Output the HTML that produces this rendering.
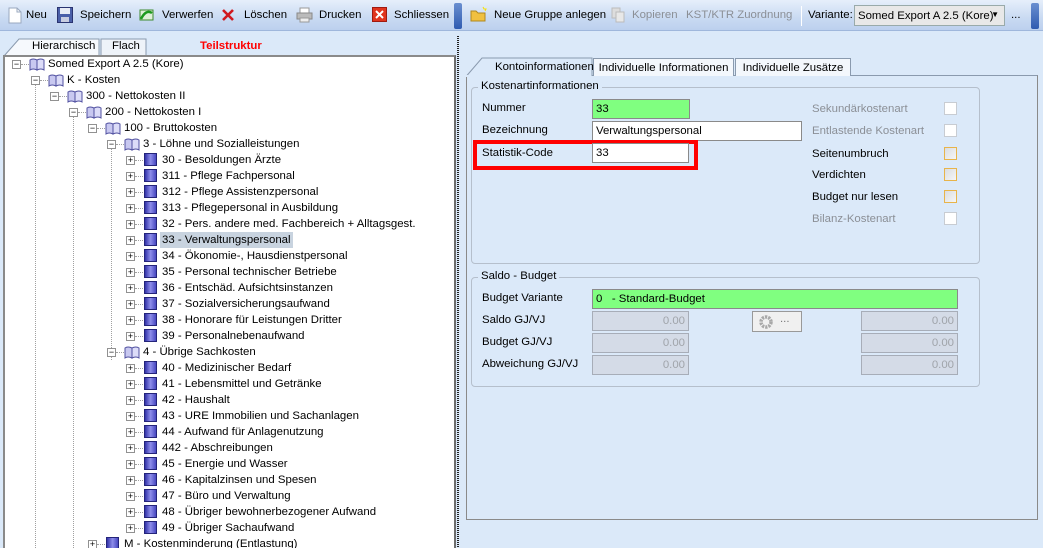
<!DOCTYPE html>
<html><head><meta charset="utf-8"><style>
*{box-sizing:border-box}
html,body{margin:0;width:1043px;height:548px;overflow:hidden}
body{background:#dbe9f9;font-family:"Liberation Sans",sans-serif;font-size:11.4px;color:#000;position:relative}
.a{position:absolute;white-space:nowrap}
.tb{left:0;top:0;width:1043px;height:31px;background:linear-gradient(#e6effb,#c9daf2 60%,#bcd0ee);border-bottom:1px solid #9fb7dc}
.grip{width:8px;height:26px;top:3px;background:linear-gradient(#6a8fd0,#2f5bb0);border-radius:2px}
.ti{top:9px}
.tree{left:3px;top:55px;width:453px;height:493px;background:#fff;border:2px solid #8a8a8a;border-bottom:none;border-right-color:#6d6d6d}
.row{height:16px;line-height:16px}
.exp{width:9px;height:9px;border:1px solid #919191;background:#fff;font-size:9px;line-height:7px;text-align:center;color:#000}
.sq{width:13px;height:13px;background:linear-gradient(90deg,#3232a8,#8e8eea 50%,#4848c0);border:1px solid #24247a}
.tab{height:18px;border:1px solid #8a9aae;border-bottom:none;background:#f3f7fc;padding:3px 0 0;text-align:center;top:58px}
.in{height:20px;border:1px solid #8a8a8a;background:#fff;padding:3px 3px;line-height:13px}
.g{background:#80ff80}
.dis{background:#d4dbe7;border-color:#a7adb8;color:#a0a4aa;text-align:right}
.cb{width:13px;height:13px;border:1px solid #c8ccd2;background:#fff}
.cbo{border-color:#e8b44a;background:linear-gradient(135deg,#dadde2,#f6f6f6)}
.gb{border:1px solid #b5bfcc;border-radius:4px}
.lbl{background:#dbe9f9;padding:0 3px}
.gray{color:#8b8f96}
</style></head><body>
<div class="a tb"></div>
<svg class="a" style="left:8px;top:7px" width="14" height="17"><path d="M1 1h8l4 4v11H1z" fill="#fff" stroke="#9aa8bf"/><path d="M9 1v4h4" fill="none" stroke="#9aa8bf"/></svg>
<div class="a ti" style="left:26px">Neu</div>
<svg class="a" style="left:57px;top:7px" width="16" height="16"><rect x="0.5" y="0.5" width="15" height="15" fill="#4a5fa8" stroke="#2a3470"/><rect x="3" y="1" width="10" height="6" fill="#e8ecf5"/><rect x="4" y="10" width="8" height="5" fill="#c8cde0"/></svg>
<div class="a ti" style="left:80px">Speichern</div>
<svg class="a" style="left:138px;top:7px" width="17" height="16"><rect x="2" y="3" width="13" height="10" fill="#e0f0d8" stroke="#3c8a2e"/><path d="M3 12 Q8 2 14 6" stroke="#1e9a1e" stroke-width="2.5" fill="none"/></svg>
<div class="a ti" style="left:162px">Verwerfen</div>
<svg class="a" style="left:221px;top:8px" width="14" height="14"><path d="M2 2L12 12M12 2L2 12" stroke="#d0181e" stroke-width="2.6"/></svg>
<div class="a ti" style="left:244px">Löschen</div>
<svg class="a" style="left:296px;top:7px" width="17" height="16"><rect x="4" y="1" width="9" height="6" fill="#fff" stroke="#999"/><rect x="1" y="6" width="15" height="6" fill="#bbb" stroke="#888"/><rect x="4" y="11" width="9" height="4" fill="#eee" stroke="#999"/></svg>
<div class="a ti" style="left:319px">Drucken</div>
<svg class="a" style="left:372px;top:7px" width="15" height="15"><rect x="0.5" y="0.5" width="14" height="14" fill="#e0341e" stroke="#a01a10"/><path d="M4 4L11 11M11 4L4 11" stroke="#fff" stroke-width="2"/></svg>
<div class="a ti" style="left:394px">Schliessen</div>
<div class="a grip" style="left:454px"></div>
<div class="a grip" style="left:1031px"></div>
<svg class="a" style="left:470px;top:6px" width="17" height="16"><path d="M1 5h5l2 2h7v8H1z" fill="#f0c040" stroke="#b08820"/><path d="M13 1l1 2 2 0-1 2" stroke="#f8e000" fill="none"/></svg>
<div class="a ti" style="left:494px">Neue Gruppe anlegen</div>
<svg class="a" style="left:611px;top:7px" width="14" height="16"><rect x="1" y="1" width="8" height="10" fill="#ddd" stroke="#bbb"/><rect x="5" y="5" width="8" height="10" fill="#e8e8e8" stroke="#bbb"/></svg>
<div class="a ti gray" style="left:632px">Kopieren</div>
<div class="a ti gray" style="left:686px">KST/KTR Zuordnung</div>
<div class="a" style="left:801px;top:6px;width:1px;height:20px;background:#fff"></div>
<div class="a ti" style="left:808px">Variante:</div>
<div class="a" style="left:854px;top:5px;width:151px;height:21px;background:#e8e8e8;border:1px solid #9aa;padding:4px 3px">Somed Export A 2.5 (Kore)<span style="position:absolute;right:5px;top:4px;font-size:8px">▼</span></div>
<div class="a ti" style="left:1011px">...</div>

<svg class="a" style="left:3px;top:37px" width="150" height="20"><path d="M1 19 L16 2 H96 V19" fill="#f6f9fd" stroke="#8a9aae"/><path d="M98 19 V2 H143 V19" fill="#eef3f9" stroke="#8a9aae"/></svg>
<div class="a" style="left:32px;top:40px">Hierarchisch</div>
<div class="a" style="left:112px;top:40px">Flach</div>
<div class="a" style="left:200px;top:40px;color:#f00;font-weight:bold">Teilstruktur</div>

<div class="a tree"></div>
<div class="a" style="left:457px;top:36px;width:2px;height:512px;background:repeating-linear-gradient(#222 0 1px,#dbe9f9 1px 2px)"></div>

<div id="tr"></div>
<script>
var rows=[[0,'b','−','Somed Export A 2.5 (Kore)'],[1,'b','−','K - Kosten'],[2,'b','−','300 - Nettokosten II'],[3,'b','−','200 - Nettokosten I'],[4,'b','−','100 - Bruttokosten'],[5,'b','−','3 - Löhne und Sozialleistungen']];
['30 - Besoldungen Ärzte','311 - Pflege Fachpersonal','312 - Pflege Assistenzpersonal','313 - Pflegepersonal in Ausbildung','32 - Pers. andere med. Fachbereich + Alltagsgest.','33 - Verwaltungspersonal','34 - Ökonomie-, Hausdienstpersonal','35 - Personal technischer Betriebe','36 - Entschäd. Aufsichtsinstanzen','37 - Sozialversicherungsaufwand','38 - Honorare für Leistungen Dritter','39 - Personalnebenaufwand'].forEach(function(t){rows.push([6,'s','+',t])});
rows.push([5,'b','−','4 - Übrige Sachkosten']);
['40 - Medizinischer Bedarf','41 - Lebensmittel und Getränke','42 - Haushalt','43 - URE Immobilien und Sachanlagen','44 - Aufwand für Anlagenutzung','442 - Abschreibungen','45 - Energie und Wasser','46 - Kapitalzinsen und Spesen','47 - Büro und Verwaltung','48 - Übriger bewohnerbezogener Aufwand','49 - Übriger Sachaufwand'].forEach(function(t){rows.push([6,'s','+',t])});
rows.push([4,'s','+','M - Kostenminderung (Entlastung)']);
var h='';
[[1,84,548],[3,116,548],[5,148,360]].forEach(function(v){var x=16+19*v[0];h+='<div class="a" style="left:'+x+'px;top:'+v[1]+'px;width:1px;height:'+(v[2]-v[1])+'px;border-left:1px dotted #a0a0a0"></div>'});
rows.forEach(function(r,i){var L=r[0],y=56+16*i,x=12+19*L;
h+='<div class="a" style="left:'+(x+9)+'px;top:'+(y+8)+'px;width:8px;border-top:1px dotted #a0a0a0"></div>';
h+='<div class="a exp" style="left:'+x+'px;top:'+(y+4)+'px">'+r[2]+'</div>';
if(r[1]=='b')h+='<svg class="a" style="left:'+(x+17)+'px;top:'+(y+1)+'px" width="16" height="14"><path d="M1 3Q4 1 8 3V13Q4 11 1 13Z" fill="#c8c8f0" stroke="#5050a0"/><path d="M15 3Q12 1 8 3V13Q12 11 15 13Z" fill="#dcdcf8" stroke="#5050a0"/></svg>';
else h+='<div class="a sq" style="left:'+(x+18)+'px;top:'+(y+1)+'px"></div>';
var sel=r[3]=='33 - Verwaltungspersonal';
h+='<div class="a row" style="left:'+(x+34)+'px;top:'+y+'px;padding:0 2px;'+(sel?'background:#c8d3df;':'')+'">'+r[3]+'</div>';});
document.getElementById('tr').innerHTML=h;
</script>

<div class="a" style="left:466px;top:75px;width:572px;height:445px;border:1px solid #8a8a8a;border-top-color:#8a9aae"></div>
<svg class="a" style="left:466px;top:57px" width="130" height="20"><path d="M0.5 19 L16 1 H126 V19" fill="#dbe9f9" stroke="#8a9aae"/></svg>
<div class="a" style="left:466px;top:75px;width:125px;height:2px;background:#dbe9f9"></div>
<div class="a" style="left:495px;top:61px">Kontoinformationen</div>
<div class="a tab" style="left:593px;width:141px">Individuelle Informationen</div>
<div class="a tab" style="left:735px;width:116px">Individuelle Zusätze</div>

<div class="a gb" style="left:471px;top:87px;width:509px;height:177px"></div>
<div class="a lbl" style="left:478px;top:80px">Kostenartinformationen</div>
<div class="a" style="left:482px;top:102px">Nummer</div>
<div class="a in g" style="left:592px;top:99px;width:98px">33</div>
<div class="a" style="left:482px;top:124px">Bezeichnung</div>
<div class="a in" style="left:592px;top:121px;width:210px">Verwaltungspersonal</div>
<div class="a" style="left:473px;top:140px;width:225px;height:30px;border:4px solid #f00"></div>
<div class="a" style="left:482px;top:147px">Statistik-Code</div>
<div class="a in" style="left:592px;top:143px;width:97px">33</div>

<div class="a gray" style="left:812px;top:103px">Sekundärkostenart</div>
<div class="a cb" style="left:944px;top:102px"></div>
<div class="a gray" style="left:812px;top:125px">Entlastende Kostenart</div>
<div class="a cb" style="left:944px;top:124px"></div>
<div class="a" style="left:812px;top:148px">Seitenumbruch</div>
<div class="a cb cbo" style="left:944px;top:147px"></div>
<div class="a" style="left:812px;top:169px">Verdichten</div>
<div class="a cb cbo" style="left:944px;top:168px"></div>
<div class="a" style="left:812px;top:191px">Budget nur lesen</div>
<div class="a cb cbo" style="left:944px;top:190px"></div>
<div class="a gray" style="left:812px;top:213px">Bilanz-Kostenart</div>
<div class="a cb" style="left:944px;top:212px"></div>

<div class="a gb" style="left:471px;top:277px;width:509px;height:110px"></div>
<div class="a lbl" style="left:478px;top:270px">Saldo - Budget</div>
<div class="a" style="left:482px;top:292px">Budget Variante</div>
<div class="a in g" style="left:592px;top:289px;width:366px">0&nbsp;&nbsp; - Standard-Budget</div>
<div class="a" style="left:482px;top:314px">Saldo GJ/VJ</div>
<div class="a in dis" style="left:592px;top:311px;width:97px">0.00</div>
<div class="a" style="left:752px;top:311px;width:50px;height:21px;border:1px solid #999;background:#f0f0f0"></div>
<svg class="a" style="left:758px;top:314px" width="16" height="16"><circle cx="8" cy="8" r="5" fill="none" stroke="#a8a8a8" stroke-width="3.5" stroke-dasharray="2.2 1"/></svg>
<div class="a" style="left:780px;top:313px;color:#777">...</div>
<div class="a in dis" style="left:861px;top:311px;width:97px">0.00</div>
<div class="a" style="left:482px;top:336px">Budget GJ/VJ</div>
<div class="a in dis" style="left:592px;top:333px;width:97px">0.00</div>
<div class="a in dis" style="left:861px;top:333px;width:97px">0.00</div>
<div class="a" style="left:482px;top:358px">Abweichung GJ/VJ</div>
<div class="a in dis" style="left:592px;top:355px;width:97px">0.00</div>
<div class="a in dis" style="left:861px;top:355px;width:97px">0.00</div>
</body></html>
